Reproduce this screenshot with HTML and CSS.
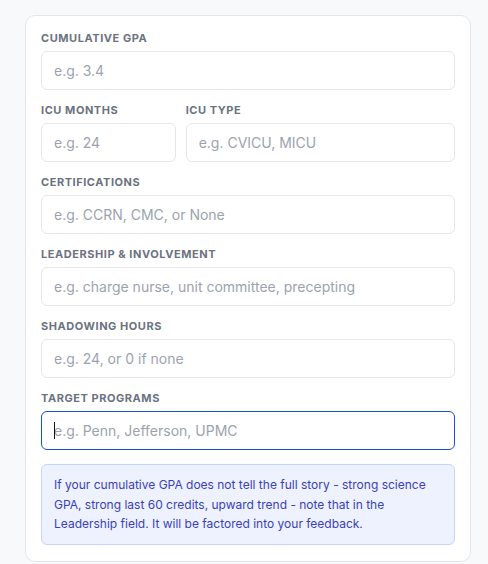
FILE: index.html
```html
<!DOCTYPE html>
<html>
<head>
<meta charset="utf-8">
<title>Profile</title>
<meta name="viewport" content="width=device-width, initial-scale=1">
<link rel="stylesheet" href="styles.css">
</head>
<body>
<form class="card">
	<div class="field">
		<label class="label">Cumulative GPA</label>
		<input class="input" type="text" placeholder="e.g. 3.4">
	</div>
	<div class="row">
		<div class="field">
			<label class="label">ICU Months</label>
			<input class="input" type="text" placeholder="e.g. 24">
		</div>
		<div class="field">
			<label class="label">ICU Type</label>
			<input class="input" type="text" placeholder="e.g. CVICU, MICU">
		</div>
	</div>
	<div class="field">
		<label class="label">Certifications</label>
		<input class="input" type="text" placeholder="e.g. CCRN, CMC, or None">
	</div>
	<div class="field">
		<label class="label">Leadership &amp; Involvement</label>
		<input class="input" type="text" placeholder="e.g. charge nurse, unit committee, precepting">
	</div>
	<div class="field">
		<label class="label">Shadowing Hours</label>
		<input class="input" type="text" placeholder="e.g. 24, or 0 if none">
	</div>
	<div class="field">
		<label class="label">Target Programs</label>
		<div class="focus-wrap">
			<input class="input focused" type="text" placeholder="e.g. Penn, Jefferson, UPMC">
			<span class="caret"></span>
		</div>
	</div>
	<p class="note">If your cumulative GPA does not tell the full story - strong science GPA, strong last 60 credits, upward trend - note that in the Leadership field. It will be factored into your feedback.</p>
</form>
</body>
</html>
```
FILE: styles.css
```css
body{
	margin:0;
	background:#f8f9fb;
	font-family:Inter, "Noto Sans", sans-serif;
}
.card{
	margin:15px 17px 0 25px;
	padding:16px 15px 16px;
	background:#fff;
	border:1px solid #e5e7eb;
	border-radius:10px;
	display:flex;
	flex-direction:column;
	gap:14px;
}
.row{
	display:grid;
	grid-template-columns:1fr 2fr;
	gap:10px;
}
.field{
	display:flex;
	flex-direction:column;
}
.label{
	font-size:11px;
	font-weight:700;
	letter-spacing:0.05em;
	text-transform:uppercase;
	color:#6b7280;
	margin-bottom:6px;
	line-height:13px;
}
.input{
	font-family:inherit;
	font-size:14px;
	height:39px;
	box-sizing:border-box;
	padding:0 12px;
	border:1px solid #e5e7eb;
	border-radius:6px;
	background:#fff;
	color:#111827;
	width:100%;
	outline:none;
}
.input::placeholder{ color:#9ca3af; }
.input.focused{ border-color:#1d4ed8; }
.focus-wrap{ position:relative; }
.caret{
	position:absolute;
	left:13px;
	top:11px;
	width:1px;
	height:17px;
	background:#111;
}
.note{
	margin:0;
	padding:10px 12px;
	background:#eef2ff;
	border:1px solid #c7d2fe;
	border-radius:6px;
	color:#3b3fb8;
	font-size:12px;
	line-height:19.5px;
}
```
